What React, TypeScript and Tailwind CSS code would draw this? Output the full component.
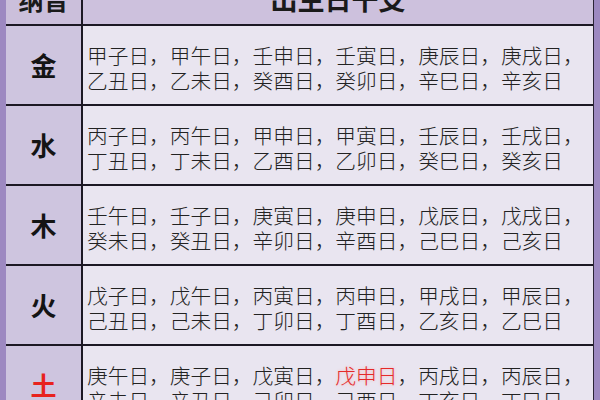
const rows: { el: string; red?: boolean; lines: string[][] }[] = [
  {
    el: "金",
    lines: [
      ["甲子日", "甲午日", "壬申日", "壬寅日", "庚辰日", "庚戌日"],
      ["乙丑日", "乙未日", "癸酉日", "癸卯日", "辛巳日", "辛亥日"],
    ],
  },
  {
    el: "水",
    lines: [
      ["丙子日", "丙午日", "甲申日", "甲寅日", "壬辰日", "壬戌日"],
      ["丁丑日", "丁未日", "乙酉日", "乙卯日", "癸巳日", "癸亥日"],
    ],
  },
  {
    el: "木",
    lines: [
      ["壬午日", "壬子日", "庚寅日", "庚申日", "戊辰日", "戊戌日"],
      ["癸未日", "癸丑日", "辛卯日", "辛酉日", "己巳日", "己亥日"],
    ],
  },
  {
    el: "火",
    lines: [
      ["戊子日", "戊午日", "丙寅日", "丙申日", "甲戌日", "甲辰日"],
      ["己丑日", "己未日", "丁卯日", "丁酉日", "乙亥日", "乙巳日"],
    ],
  },
  {
    el: "土",
    red: true,
    lines: [
      ["庚午日", "庚子日", "戊寅日", "戊申日", "丙戌日", "丙辰日"],
      ["辛未日", "辛丑日", "己卯日", "己酉日", "丁亥日", "丁巳日"],
    ],
  },
];

const font = "font-['Noto_Sans_CJK_SC',sans-serif]";

function Line({ items, last, hl }: { items: string[]; last: boolean; hl?: string }) {
  return (
    <div className="leading-[25px] whitespace-nowrap [text-spacing-trim:space-all]">
      {items.map((d, i) => (
        <span key={i}>
          {d === hl ? (
            <span className="text-[#e42a2a] [text-shadow:0_0_3px_#f7b4b4]">{d}</span>
          ) : (
            d
          )}
          {i < items.length - 1 || !last ? "，" : ""}
        </span>
      ))}
    </div>
  );
}

export default function App() {
  return (
    <div className={`w-[600px] h-[400px] overflow-hidden bg-[#9d89c1] pl-[6px] pr-[6px] ${font}`}>
      <div className="border-r border-[#2a2436] h-full">
        {/* Header */}
        <div className="flex h-[26px] border-b-2 border-[#1c1824] overflow-hidden">
          <div className="w-[77px] shrink-0 border-r-2 border-[#1c1824] bg-[#cbbfdb] flex justify-center">
            <div className="-mt-[14px] text-[25px] leading-[26px] font-bold text-[#1a1a1a]">纳音</div>
          </div>
          <div className="flex-1 bg-[#cdc1dd] flex justify-center">
            <div className="-mt-[15px] text-[27px] leading-[28px] font-bold text-[#1a1a1a]">出生日干支</div>
          </div>
        </div>

        {rows.map((r) => (
          <div key={r.el} className="flex h-[80px] border-b-2 border-[#1c1824]">
            <div className="w-[77px] shrink-0 border-r-2 border-[#1c1824] bg-[#cec5df] flex items-center justify-center">
              <span
                className={`text-[26px] font-bold leading-none ${r.red ? "text-[#e8221e]" : "text-[#141414]"}`}
              >
                {r.el}
              </span>
            </div>
            <div className="flex-1 bg-[#e9e5f0] pl-[4px] pt-[17px] text-[20.7px] font-light text-[#222]">
              <Line items={r.lines[0]} last={false} hl={r.red ? "戊申日" : undefined} />
              <Line items={r.lines[1]} last={true} />
            </div>
          </div>
        ))}
      </div>
    </div>
  );
}
